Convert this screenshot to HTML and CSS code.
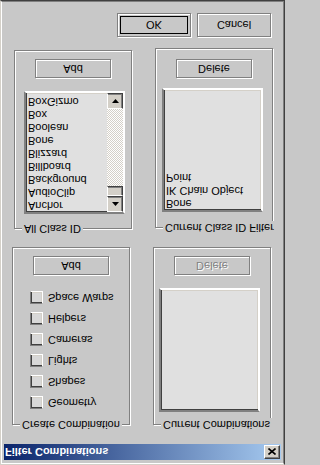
FILE: index.html
```html
<!DOCTYPE html>
<html>
<head>
<meta charset="utf-8">
<title>Filter Combinations</title>
<link rel="stylesheet" href="styles.css">
</head>
<body>
<div class="window">
  <div class="frame">
    <div class="titlebar">
      <span class="title">Filter Combinations</span>
      <span class="close"><svg width="8" height="7" viewBox="0 0 8 7"><path d="M0.5 0.5 L7.5 6.5 M7.5 0.5 L0.5 6.5" stroke="#000" stroke-width="1.6" fill="none"/></svg></span>
    </div>
    <div class="content">
      <div class="row row-a">
        <div class="group group-create">
          <span class="group-label">Create Combination</span>
          <div class="checks">
            <label class="check"><span class="box"></span>Geometry</label>
            <label class="check"><span class="box"></span>Shapes</label>
            <label class="check"><span class="box"></span>Lights</label>
            <label class="check"><span class="box"></span>Cameras</label>
            <label class="check"><span class="box"></span>Helpers</label>
            <label class="check"><span class="box"></span>Space Warps</label>
          </div>
          <div class="btn btn-add-a">Add</div>
        </div>
        <div class="group group-comb">
          <span class="group-label">Current Combinations</span>
          <div class="listbox list-comb"></div>
          <div class="btn btn-del-a disabled">Delete</div>
        </div>
      </div>
      <div class="row row-b">
        <div class="group group-all">
          <span class="group-label">All Class ID</span>
          <div class="listbox list-all">
            <div class="items">
              <div>Anchor</div>
              <div>AudioClip</div>
              <div>Background</div>
              <div>Billboard</div>
              <div>Blizzard</div>
              <div>Bone</div>
              <div>Boolean</div>
              <div>Box</div>
              <div>BoxGizmo</div>
              <div>C-Ext</div>
            </div>
            <div class="scrollbar">
              <div class="sbtn"><svg width="7" height="4" viewBox="0 0 7 4"><polygon points="0,4 7,4 3.5,0" fill="#000"/></svg></div>
              <div class="thumb"></div>
              <div class="track"></div>
              <div class="sbtn"><svg width="7" height="4" viewBox="0 0 7 4"><polygon points="0,0 7,0 3.5,4" fill="#000"/></svg></div>
            </div>
          </div>
          <div class="btn btn-add-b">Add</div>
        </div>
        <div class="group group-filter">
          <span class="group-label">Current Class ID Filter</span>
          <div class="listbox list-filter">
            <div class="items">
              <div>Bone</div>
              <div>IK Chain Object</div>
              <div>Point</div>
            </div>
          </div>
          <div class="btn btn-del-b">Delete</div>
        </div>
      </div>
      <div class="row row-c">
        <div class="btn btn-ok"><span class="ok-inner">OK</span></div>
        <div class="btn btn-cancel">Cancel</div>
      </div>
    </div>
  </div>
</div>
</body>
</html>
```
FILE: styles.css
```css
* { box-sizing: border-box; }
html, body { margin: 0; padding: 0; background: #c8c8c8; }
body {
  font-family: "Liberation Sans", Arial, sans-serif;
  font-size: 11px;
  color: #000;
  line-height: 13px;
}
.window {
  width: 285px;
  height: 465px;
  transform: scaleY(-1);
  border: 1px solid;
  border-color: #d4d0c8 #404040 #404040 #d4d0c8;
  background: #c8c8c8;
}
.frame {
  height: 100%;
  border: 1px solid;
  border-color: #fff #808080 #808080 #fff;
  padding: 3px 2px 2px 2px;
  display: flex;
  flex-direction: column;
}
.titlebar {
  height: 16px;
  flex: none;
  display: flex;
  align-items: center;
  justify-content: space-between;
  padding: 0 1px 0 1px;
  background: linear-gradient(to right, #0a246a, #a6caf0);
  color: #fff;
  font-weight: bold;
}
.title { white-space: nowrap; }
.close {
  width: 16px;
  height: 14px;
  border: 1px solid;
  border-color: #404040 #404040 #fff #fff;
  box-shadow: inset -1px 1px #808080;
  background: #d4d0c8;
  display: flex;
  align-items: center;
  justify-content: center;
}
.close svg { display: block; }
.content { flex: 1; display: flex; flex-direction: column; }
.row { display: flex; align-items: flex-start; flex: none; }
.row-a { margin-top: 19px; padding-left: 8px; }
.row-b { margin-top: 18px; padding-left: 10px; }
.row-c { margin-top: 11px; padding-left: 113px; }

.group {
  position: relative;
  width: 118px;
  border: 1px solid #808080;
  box-shadow: 1px -1px 0 #fff, inset 1px -1px 0 #fff;
  display: flex;
  flex-direction: column;
  align-items: flex-start;
}
.group-label {
  position: absolute;
  top: -7px;
  left: 7px;
  padding: 0 2px;
  background: #c8c8c8;
  white-space: nowrap;
}
.group-create { height: 178px; padding: 15px 0 0 17px; }
.group-comb { height: 178px; margin-left: 23px; padding: 12px 0 0 5px; }
.group-all { height: 179px; padding: 14px 0 0 9px; }
.group-filter { height: 180px; margin-top: 1px; margin-left: 23px; padding: 15px 0 0 6px; }

.checks { display: flex; flex-direction: column; gap: 8px; }
.check { display: flex; align-items: center; height: 13px; white-space: nowrap; }
.box {
  width: 13px;
  height: 13px;
  margin-right: 5px;
  border: 1px solid;
  border-color: #808080 #fff #fff #808080;
  box-shadow: inset 1px 1px #404040, inset -1px -1px #d4d0c8;
  background: #d8d8d8;
}

.btn {
  border: 1px solid #808080;
  box-shadow: 1px -1px 0 #fff, inset 1px -1px 0 #fff;
  background: #c8c8c8;
  display: flex;
  align-items: center;
  justify-content: center;
  white-space: nowrap;
}
.btn-add-a { width: 76px; height: 19px; margin-top: 16px; margin-left: 3px; }
.btn-del-a { width: 76px; height: 19px; margin-top: 13px; margin-left: 15px; }
.btn-add-b { width: 76px; height: 19px; margin-top: 13px; margin-left: 11px; }
.btn-del-b { width: 76px; height: 19px; margin-top: 10px; margin-left: 14px; }
.disabled { color: #808080; text-shadow: 1px -1px 0 #fff; }
.btn-ok { width: 74px; height: 24px; padding: 2px; }
.ok-inner {
  align-self: stretch;
  flex: 1;
  border: 1px solid #000;
  display: flex;
  align-items: center;
  justify-content: center;
}
.btn-cancel { width: 74px; height: 24px; margin-left: 6px; }

.listbox {
  width: 101px;
  border: 2px solid;
  border-color: #808080 #fff #fff #808080;
  box-shadow: inset 1px 1px #404040, inset -1px -1px #d4d0c8;
  background: #e0e0e0;
  display: flex;
  overflow: hidden;
}
.list-comb { height: 124px; }
.list-all { height: 123px; }
.list-filter { height: 124px; }
.items {
  flex: 1;
  overflow: hidden;
  padding: 0 0 0 2px;
  white-space: nowrap;
}
.scrollbar {
  width: 16px;
  flex: none;
  display: flex;
  flex-direction: column;
}
.sbtn, .thumb {
  border: 1px solid;
  border-color: #fff #404040 #404040 #fff;
  box-shadow: inset -1px -1px #808080;
  background: #d4d0c8;
  flex: none;
}
.sbtn {
  height: 16px;
  display: flex;
  align-items: center;
  justify-content: center;
}
.sbtn svg { display: block; }
.thumb { height: 10px; }
.track {
  flex: 1;
  background: repeating-conic-gradient(#fff 0 25%, #d4d0c8 0 50%) 0 0 / 2px 2px;
}
```
